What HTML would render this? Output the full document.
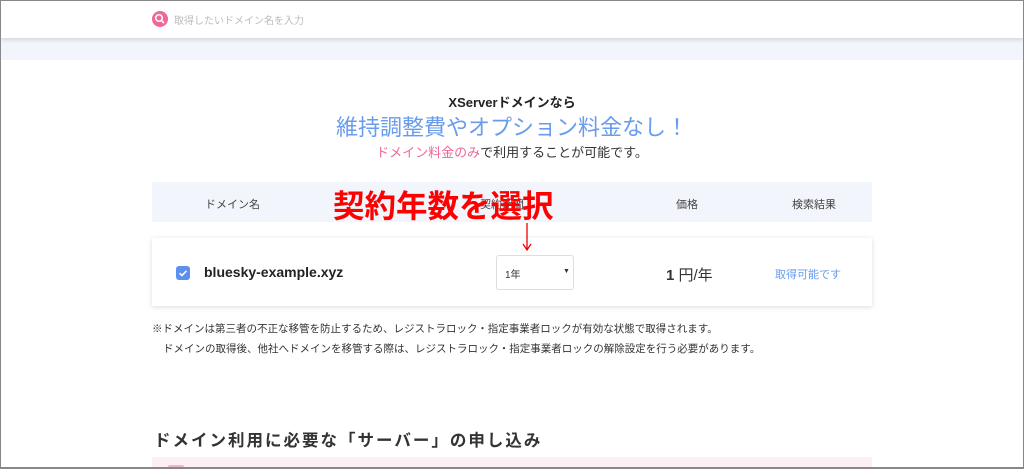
<!DOCTYPE html>
<html><head><meta charset="utf-8"><style>
*{margin:0;padding:0;box-sizing:border-box}
body{width:1024px;height:469px;overflow:hidden;background:#fff;font-family:"Liberation Sans","Noto Sans CJK JP",sans-serif;position:relative;color:#333}
.frame{position:absolute;inset:0;border:1px solid #888;border-bottom:2px solid #888;pointer-events:none;z-index:10}
.hdr{position:absolute;left:0;top:0;width:1024px;height:38px;background:#fff;box-shadow:0 2px 4px rgba(0,0,0,.12);z-index:2}
.band{position:absolute;left:0;top:38px;width:1024px;height:22px;background:#f2f5fc}
.srch{position:absolute;left:152px;top:11px;width:16px;height:16px;border-radius:50%;background:#f0679a}
.ph{position:absolute;left:174px;top:12px;font-size:10px;color:#bbb}
.t{position:absolute;white-space:nowrap}
</style></head><body>
<div class="hdr"><div class="srch"><svg width="16" height="16" viewBox="0 0 16 16"><circle cx="7" cy="7" r="3.3" fill="none" stroke="#fff" stroke-width="1.5"/><path d="M9.4 9.4L12 12" stroke="#fff" stroke-width="1.6"/></svg></div><div class="ph">取得したいドメイン名を入力</div></div>
<div class="band"></div>
<div class="t" style="left:0;width:1024px;text-align:center;top:92px;font-size:13px;font-weight:bold;color:#222">XServerドメインなら</div>
<div class="t" style="left:0;width:1024px;text-align:center;top:110px;font-size:22px;color:#6a9bec">維持調整費やオプション料金なし！</div>
<div class="t" style="left:0;width:1024px;text-align:center;top:142px;font-size:13px;color:#333"><span style="color:#f0679a">ドメイン料金のみ</span>で利用することが可能です。</div>
<div style="position:absolute;left:152px;top:182px;width:720px;height:40px;background:#f2f5fc"></div>
<div class="t" style="left:205px;top:196px;font-size:11px;color:#444">ドメイン名</div>
<div class="t" style="left:480px;top:196px;font-size:11px;color:#444">契約期間</div>
<div class="t" style="left:676px;top:196px;font-size:11px;color:#444">価格</div>
<div class="t" style="left:792px;top:196px;font-size:11px;color:#444">検索結果</div>
<div class="t" style="left:333px;top:181px;font-size:31.5px;font-weight:bold;color:#f00;letter-spacing:0">契約年数を選択</div>
<div style="position:absolute;left:152px;top:238px;width:720px;height:68px;background:#fff;box-shadow:0 1px 5px rgba(0,0,0,.14)"></div>
<svg style="position:absolute;left:521px;top:222px;z-index:3" width="12" height="30"><path d="M6 1V27M2 22L6 28L10 22" stroke="#e00" stroke-width="1.3" fill="none"/></svg>
<div style="position:absolute;left:176px;top:266px;width:14px;height:14px;border-radius:3px;background:#5b8ff0"><svg width="14" height="14"><path d="M3.5 7.2L6 9.5L10.5 4.8" stroke="#fff" stroke-width="1.6" fill="none"/></svg></div>
<div class="t" style="left:204px;top:264px;font-size:14px;font-weight:bold;color:#222">bluesky-example.xyz</div>
<div style="position:absolute;left:496px;top:255px;width:78px;height:35px;border:1px solid #ddd;border-radius:3px;background:#fff"></div>
<div class="t" style="left:505px;top:266px;font-size:10px;color:#333">1年</div>
<div class="t" style="left:563px;top:268px;font-size:7px;color:#333">▼</div>
<div class="t" style="left:666px;top:264px;font-size:15px;color:#333"><b>1</b> 円/年</div>
<div class="t" style="left:775px;top:266px;font-size:11px;color:#6a9bec">取得可能です</div>
<div class="t" style="left:152px;top:321px;font-size:10.5px;color:#333">※ドメインは第三者の不正な移管を防止するため、レジストラロック・指定事業者ロックが有効な状態で取得されます。</div>
<div class="t" style="left:163px;top:341px;font-size:10.5px;color:#333">ドメインの取得後、他社へドメインを移管する際は、レジストラロック・指定事業者ロックの解除設定を行う必要があります。</div>
<div class="t" style="left:154px;top:427px;font-size:16.5px;font-weight:bold;color:#333;letter-spacing:2px">ドメイン利用に必要な「サーバー」の申し込み</div>
<div style="position:absolute;left:152px;top:457px;width:720px;height:12px;background:#fdf0f3"></div>
<div style="position:absolute;left:168px;top:465px;width:16px;height:4px;background:#f6b3c6;border-radius:2px"></div>
<div class="frame"></div>
</body></html>
